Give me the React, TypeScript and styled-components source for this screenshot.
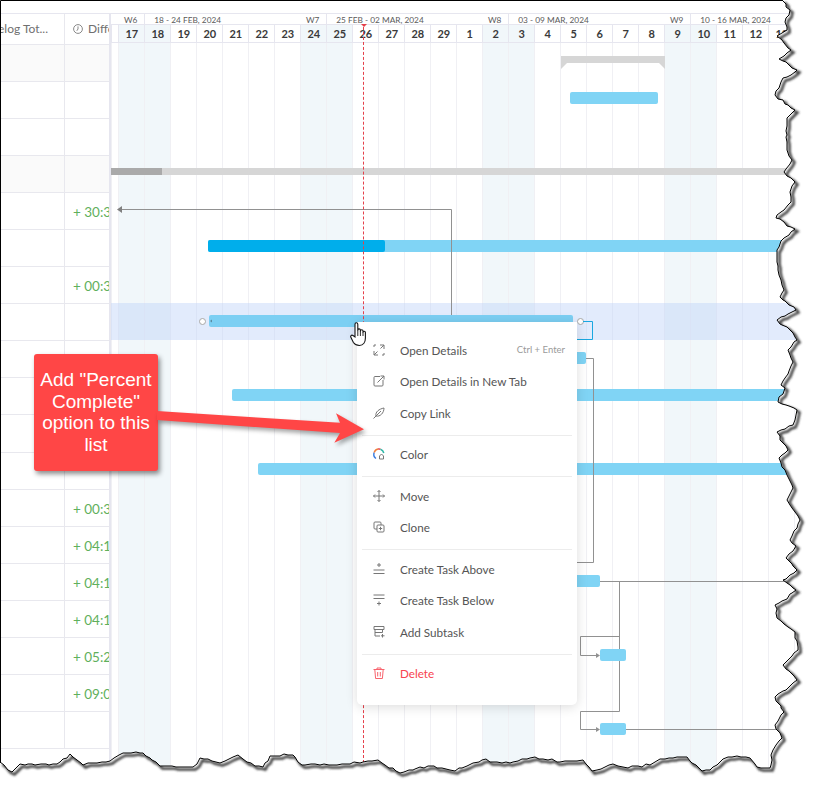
import React from 'react';
import styled, { createGlobalStyle } from 'styled-components';

const GlobalStyle = createGlobalStyle`
    html, body {
        margin: 0;
        padding: 0;
        background: #ffffff;
    }
`;

const Page = styled.div`
    position: relative;
    width: 813px;
    height: 787px;
    overflow: hidden;
    background: #ffffff;
    font-family: 'Lato', 'Liberation Sans', sans-serif;
`;

const Gantt = styled.div`
    display: flex;
    padding-top: 12.5px;
    height: 774px;
    box-sizing: border-box;
`;

/* left table */
const Table = styled.div`
    flex: 0 0 111px;
    box-sizing: border-box;
    border-right: 2px solid #e6e6ef;
    border-top: 1px solid #e6e6ef;
`;

const TableHeader = styled.div`
    display: grid;
    grid-template-columns: 65px 44px;
    height: 31px;
    box-sizing: border-box;
    border-bottom: 1px solid #e8e8ee;
    font-size: 12px;
    color: #707070;
`;

const HeaderCell = styled.div<{ $end?: boolean }>`
    display: flex;
    align-items: center;
    gap: 5px;
    overflow: hidden;
    white-space: nowrap;
    box-sizing: border-box;
    justify-content: ${props => (props.$end ? 'flex-end' : 'flex-start')};
    padding: ${props => (props.$end ? '0 16px 0 0' : '0 0 0 8px')};
    border-right: ${props => (props.$end ? '1px solid #e8e8ee' : 'none')};
`;

const Row = styled.div<{ $shaded?: boolean }>`
    display: grid;
    grid-template-columns: 65px 44px;
    height: 37.1px;
    box-sizing: border-box;
    border-bottom: 1px solid #e8e8ee;
    background: ${props => (props.$shaded ? '#fafafa' : '#ffffff')};
`;

const Cell = styled.div`
    display: flex;
    align-items: center;
    padding: 2px 0 0 8px;
    overflow: hidden;
    white-space: nowrap;
    font-size: 13.5px;
    color: #5fb05c;
    &:first-child {
        border-right: 1px solid #e8e8ee;
    }
`;

/* timeline */
const Timeline = styled.div`
    flex: 1;
    min-width: 0;
    overflow: hidden;
    display: flex;
    flex-direction: column;
`;

const WeekRow = styled.div`
    display: flex;
    height: 11.5px;
    box-sizing: border-box;
    border-top: 1px solid #e6e6ef;
    font-size: 8.3px;
    line-height: 11px;
    color: #5a5a5a;
`;

const Week = styled.div<{ $width: number }>`
    flex: 0 0 ${props => props.$width}px;
    display: flex;
    justify-content: space-between;
    box-sizing: border-box;
    padding: 1px 7px 0 9px;
    white-space: nowrap;
    & + & {
        border-left: 1px solid #e6e6ef;
    }
`;

const DayRow = styled.div`
    display: flex;
    height: 19px;
    box-sizing: border-box;
    border-top: 1px solid #e6e6ef;
    border-bottom: 1px solid #e6e6ef;
`;

const Day = styled.div<{ $weekend?: boolean; $width?: number }>`
    flex: 0 0 ${props => props.$width ?? 26}px;
    box-sizing: border-box;
    display: flex;
    align-items: center;
    justify-content: center;
    border-left: 1px solid #e6e6ef;
    background: ${props => (props.$weekend ? '#f1f7fa' : '#ffffff')};
    font-size: 11px;
    font-weight: 700;
    color: #3a3a3a;
`;

const DayBody = styled.div`
    flex: 1;
    display: flex;
`;

const DayColumn = styled.div<{ $weekend?: boolean; $width?: number }>`
    flex: 0 0 ${props => props.$width ?? 26}px;
    box-sizing: border-box;
    border-left: 1px solid #f0f0f4;
    background: ${props => (props.$weekend ? '#f1f7fa' : '#ffffff')};
`;

/* things drawn over the chart, at chart coordinates */
const RowHighlight = styled.div`
    position: absolute;
    left: 111px;
    right: 0;
    top: 303.3px;
    height: 37px;
    background: rgba(190, 210, 248, 0.446);
`;

const Bar = styled.div<{ $x: number; $y: number; $w: number; $color?: string }>`
    position: absolute;
    left: ${props => props.$x}px;
    top: ${props => props.$y}px;
    width: ${props => props.$w}px;
    height: 12px;
    border-radius: 2px;
    background: ${props => props.$color ?? '#80d4f5'};
`;

const SummaryBar = styled.div<{ $x: number; $w: number; $y: number; $fill?: string }>`
    position: absolute;
    left: ${props => props.$x}px;
    top: ${props => props.$y}px;
    width: ${props => props.$w}px;
    height: 7px;
    background: ${props => props.$fill ?? '#d6d6d6'};
`;

const Bracket = styled(SummaryBar)`
    &::before, &::after {
        content: '';
        position: absolute;
        top: 7px;
        border-top: 6px solid #d6d6d6;
    }
    &::before {
        left: 0;
        border-right: 6px solid transparent;
    }
    &::after {
        right: 0;
        border-left: 6px solid transparent;
    }
`;

const Handle = styled.div<{ $x: number }>`
    position: absolute;
    left: ${props => props.$x - 3.5}px;
    top: 317.5px;
    width: 7px;
    height: 7px;
    box-sizing: border-box;
    border: 1.3px solid #a8a8a8;
    border-radius: 50%;
    background: #ffffff;
`;

const Links = styled.svg`
    position: absolute;
    left: 0;
    top: 0;
    fill: none;
`;

const TodayLine = styled.div`
    position: absolute;
    left: 363px;
    top: 27px;
    height: 736px;
    border-left: 1px dashed #e5404a;
`;

const TodayMark = styled.div`
    position: absolute;
    left: 360.5px;
    top: 24px;
    border-top: 3px solid #e5404a;
    border-left: 3px solid transparent;
    border-right: 3px solid transparent;
`;

/* context menu */
const Menu = styled.div`
    position: absolute;
    left: 357px;
    top: 322px;
    width: 220px;
    height: 383px;
    box-sizing: border-box;
    padding-top: 9px;
    background: #ffffff;
    border-radius: 0 0 5px 5px;
    box-shadow: 0 2px 12px rgba(0, 0, 0, 0.14);
`;

const MenuSection = styled.div`
    padding: 3px 0 6px;
    margin: 0 5px;
    & + & {
        border-top: 1px solid #ececec;
    }
`;

const MenuItem = styled.div<{ $danger?: boolean }>`
    display: flex;
    align-items: center;
    height: 31.5px;
    padding: 0 7px 0 11px;
    font-size: 11.7px;
    color: ${props => (props.$danger ? '#f8434f' : '#555555')};
    svg {
        flex: 0 0 12px;
        margin-right: 15px;
        fill: none;
        stroke: ${props => (props.$danger ? '#f8636d' : '#777777')};
        stroke-width: 1;
        overflow: visible;
    }
`;

const Shortcut = styled.span`
    margin-left: auto;
    font-size: 9.5px;
    color: #9a9a9a;
`;

const Cursor = styled.svg`
    position: absolute;
    left: 350px;
    top: 322px;
`;

/* annotation */
const Callout = styled.div`
    position: absolute;
    left: 34px;
    top: 354px;
    width: 124px;
    height: 117px;
    box-sizing: border-box;
    padding: 15px 2px 0;
    border-radius: 3px;
    background: #ff4646;
    box-shadow: 2px 3px 5px rgba(0, 0, 0, 0.45);
    font-family: 'Liberation Sans', Arial, sans-serif;
    font-size: 19px;
    line-height: 21.7px;
    text-align: center;
    color: #ffffff;
`;

const CalloutArrow = styled.svg`
    position: absolute;
    left: 0;
    top: 0;
    filter: drop-shadow(2px 3px 2px rgba(0, 0, 0, 0.35));
`;

const TornEdge = styled.svg`
    position: absolute;
    left: 0;
    top: 0;
`;

const days = [17, 18, 19, 20, 21, 22, 23, 24, 25, 26, 27, 28, 29, 1, 2, 3, 4, 5, 6, 7, 8, 9, 10, 11, 12, 13, 14];
const weekends = [0, 1, 7, 8, 14, 15, 21, 22];

const rows: { value?: string; shaded?: boolean }[] = [
    { shaded: true }, {}, {}, { shaded: true },
    { value: '+ 30:30' }, {}, { value: '+ 00:30' }, {}, {}, {}, {}, {},
    { value: '+ 00:30' }, { value: '+ 04:15' }, { value: '+ 04:15' }, { value: '+ 04:15' },
    { value: '+ 05:24' }, { value: '+ 09:00' }, {},
];

const edgePoints = [
    [782, 0], [790, 10], [785, 22], [787, 30], [777, 36], [791, 50], [779, 59], [797, 70], [783, 78], [775, 95],
    [795, 110], [787, 118], [787, 150], [792, 160], [784, 172], [795, 182], [790, 192], [791, 202], [777, 215],
    [776, 218], [795, 229], [784, 238], [777, 250], [777, 262], [779, 275], [784, 290], [780, 297], [796, 310],
    [777, 320], [793, 333], [797, 340], [788, 350], [793, 362], [781, 385], [785, 388], [778, 402], [797, 410],
    [793, 425], [777, 432], [788, 450], [779, 458], [785, 470], [793, 488], [787, 500], [800, 520], [790, 540],
    [796, 546], [786, 558], [797, 570], [783, 580], [796, 590], [775, 605], [777, 618], [795, 632], [798, 650],
    [783, 665], [797, 680], [775, 697], [784, 712], [775, 725], [782, 738], [773, 750], [770, 768], [757, 767],
    [750, 758], [737, 756], [723, 759], [710, 770], [702, 771], [687, 757], [660, 759], [650, 765], [623, 767],
    [613, 764], [592, 771], [583, 760], [560, 762], [535, 757], [510, 763], [482, 760], [455, 771], [428, 766],
    [400, 773], [378, 760], [363, 762], [333, 765], [302, 765], [293, 755], [270, 756], [263, 767], [247, 762],
    [238, 755], [220, 763], [200, 758], [193, 767], [160, 766], [143, 753], [123, 753], [110, 761], [83, 765],
    [70, 754], [57, 764], [20, 764], [12, 772], [0, 762],
];

// roughen the hand-read outline a little so that it looks torn
function tornLine(points: number[][]) {
    let seed = 7;
    const noise = () => {
        seed = (seed * 16807) % 2147483647;
        const n = seed % 6;
        return n === 0 ? -1 : n === 1 ? 1 : 0;
    };
    const out: string[] = [];
    points.forEach((p, i) => {
        out.push(`${p[0]},${p[1]}`);
        const next = points[i + 1];
        if (!next) return;
        const steps = Math.floor(Math.hypot(next[0] - p[0], next[1] - p[1]) / 4);
        for (let s = 1; s < steps; s++) {
            const x = Math.round(p[0] + ((next[0] - p[0]) * s) / steps) + noise();
            const y = Math.round(p[1] + ((next[1] - p[1]) * s) / steps) + noise();
            out.push(`${x},${y}`);
        }
    });
    return out.join(' ');
}

const edge = tornLine(edgePoints);

function Clock() {
    return (
        <svg width="10" height="10" viewBox="0 0 10 10" style={{ flex: '0 0 10px' }} fill="none" stroke="#888">
            <circle cx="5" cy="5" r="4.4" />
            <path d="M5 2.4V5L3.8 6.8" />
        </svg>
    );
}

const icons = {
    details: <path d="M7 1H11V5M11 1L7.5 4.5M5 11H1V7M1 11L4.5 7.5M1 3V1H3M11 9V11H9" />,
    newTab: <path d="M7 1.5H2A1 1 0 0 0 1 2.500V10A1 1 0 0 0 2 11H9A1 1 0 0 0 10 10V5M4.500 7.500L11 1M7.500 1H11V4.500" />,
    link: <path d="M3 9C2 5 6 2 11 1C11 6 7 10 3 9ZM.5 11.5L8 4" />,
    move: <path d="M6 .5V11.5M.5 6H11.5M4.5 2L6 .5L7.5 2M4.5 10L6 11.5L7.5 10M2 4.5L.5 6L2 7.5M10 4.5L11.5 6L10 7.5" />,
    clone: <path d="M8 4V2A1 1 0 0 0 7 1H2A1 1 0 0 0 1 2V7A1 1 0 0 0 2 8H4M5 4H10A1 1 0 0 1 11 5V10A1 1 0 0 1 10 11H5A1 1 0 0 1 4 10V5A1 1 0 0 1 5 4ZM7.5 5.8V9.2M5.8 7.5H9.2" />,
    above: <path d="M6 0V4M4 2H8M.5 7H11.5M.5 10.5H11.5" />,
    below: <path d="M.5 1H11.5M.5 4.5H11.5M6 7.5V11.5M4 9.5H8" />,
    subtask: <path d="M1 .5H11V3.5H1ZM2 3.5V10H7M2 6.5H9.5V4M9.5 8V11.5M8 9.8H11.5" />,
    trash: <path d="M.5 2.5H11.5M4 2.5V1H8V2.5M1.8 2.5L2.6 11.5H9.4L10.2 2.5M4.7 5V9.5M7.3 5V9.5" />,
};

function ColorIcon() {
    return (
        <svg width="12" height="12" viewBox="0 0 12 12" style={{ strokeWidth: 1.5 }}>
            <path d="M1.200 4.500A5 5 0 0 0 3 10.500" stroke="#3f7fe0" />
            <path d="M1.200 4.500A5 5 0 0 1 5 1.100" stroke="#f0803c" />
            <path d="M5 1.100A5 5 0 0 1 7.500 1.200" stroke="#e5484d" />
            <path d="M7.500 1.200A5 5 0 0 1 10.800 5" stroke="#2bb5a5" />
            <path d="M6.500 8L8.500 6L10.500 8V11H6.500Z" stroke="#777" strokeWidth="1" />
        </svg>
    );
}

function MenuIcon({ d }: { d: React.ReactNode }) {
    return <svg width="12" height="12" viewBox="0 0 12 12">{d}</svg>;
}

export default function App() {
    return (
        <Page>
            <GlobalStyle />
            <Gantt>
                <Table>
                    <TableHeader>
                        <HeaderCell $end>Timelog Tot...</HeaderCell>
                        <HeaderCell><Clock />Difference</HeaderCell>
                    </TableHeader>
                    {rows.map((row, i) => (
                        <Row key={i} $shaded={row.shaded}>
                            <Cell />
                            <Cell>{row.value}</Cell>
                        </Row>
                    ))}
                </Table>
                <Timeline>
                    <WeekRow>
                        <Week $width={33.3}><span />W6</Week>
                        <Week $width={182}><span>18 - 24 FEB, 2024</span>W7</Week>
                        <Week $width={182}><span>25 FEB - 02 MAR, 2024</span>W8</Week>
                        <Week $width={182}><span>03 - 09 MAR, 2024</span>W9</Week>
                        <Week $width={182}><span>10 - 16 MAR, 2024</span></Week>
                    </WeekRow>
                    <DayRow>
                        <Day $width={7.3} />
                        {days.map((day, i) => (
                            <Day key={i} $weekend={weekends.includes(i)}>{day}</Day>
                        ))}
                    </DayRow>
                    <DayBody>
                        <DayColumn $width={7.3} />
                        {days.map((day, i) => (
                            <DayColumn key={i} $weekend={weekends.includes(i)} />
                        ))}
                    </DayBody>
                </Timeline>
            </Gantt>

            <RowHighlight />

            <Bracket $x={561} $w={104} $y={56} />
            <Bar $x={570} $y={92} $w={88} />
            <SummaryBar $x={111} $w={702} $y={168} />
            <SummaryBar $x={111} $w={51} $y={168} $fill="#aaaaaa" />
            <Bar $x={208} $y={240} $w={605} />
            <Bar $x={208} $y={240} $w={177} $color="#00aeeb" />
            <Bar $x={209} $y={315} $w={364} $color="#7ccff3" />
            <Bar $x={560} $y={352} $w={26} />
            <Bar $x={232} $y={389} $w={581} />
            <Bar $x={258} $y={463} $w={555} />
            <Bar $x={560} $y={575} $w={40} />
            <Bar $x={600} $y={649} $w={26} />
            <Bar $x={600} $y={723} $w={26} />
            <Handle $x={202} />
            <Handle $x={580} />

            <Links width="813" height="787" viewBox="0 0 813 787">
                <g stroke="#919191">
                    <path d="M122 209.5H451.5V315" />
                    <path d="M586 358.500H593.500V562.500H570" />
                    <path d="M600 581.500H790" />
                    <path d="M619.500 581.500V649M619.500 661V711.500H580.500V729.500H598" />
                    <path d="M619.500 636.500H580.500V655.500H598" />
                    <path d="M626 729.500H785" />
                </g>
                <path d="M583 321.500H592.500V339.500H575" stroke="#1aa7e0" />
                <path d="M117 209.500L122 206V213Z" fill="#808080" />
                <path d="M596 653L600 655.500L596 658Z" fill="#919191" />
                <path d="M596 727L600 729.500L596 732Z" fill="#919191" />
                <path d="M210 321L212 319.500V322.500Z" fill="#5c8aa0" />
            </Links>

            <TodayLine />
            <TodayMark />

            <Menu>
                <MenuSection>
                    <MenuItem><MenuIcon d={icons.details} />Open Details<Shortcut>Ctrl + Enter</Shortcut></MenuItem>
                    <MenuItem><MenuIcon d={icons.newTab} />Open Details in New Tab</MenuItem>
                    <MenuItem><MenuIcon d={icons.link} />Copy Link</MenuItem>
                </MenuSection>
                <MenuSection>
                    <MenuItem><ColorIcon />Color</MenuItem>
                </MenuSection>
                <MenuSection>
                    <MenuItem><MenuIcon d={icons.move} />Move</MenuItem>
                    <MenuItem><MenuIcon d={icons.clone} />Clone</MenuItem>
                </MenuSection>
                <MenuSection>
                    <MenuItem><MenuIcon d={icons.above} />Create Task Above</MenuItem>
                    <MenuItem><MenuIcon d={icons.below} />Create Task Below</MenuItem>
                    <MenuItem><MenuIcon d={icons.subtask} />Add Subtask</MenuItem>
                </MenuSection>
                <MenuSection>
                    <MenuItem $danger><MenuIcon d={icons.trash} />Delete</MenuItem>
                </MenuSection>
            </Menu>

            <Cursor width="18" height="25" viewBox="0 0 18 25">
                <path
                    d="M5 11V2.2a1.4 1.4 0 0 1 2.8 0V9V8.2a1.3 1.3 0 0 1 2.6 0V9.5V9a1.3 1.3 0 0 1 2.6 0V10.5a1.2 1.2 0 0 1 2.4 0V16c0 4-2 7.5-6 7.5c-3 0-4.500-1-6-3L1 15.500c-1-1.500.5-3 2-2L5 15Z"
                    fill="#ffffff"
                    stroke="#141414"
                    strokeWidth="1.1"
                />
                <path d="M7.800 9V14M10.400 9V14M13 10V14" stroke="#141414" strokeWidth=".9" fill="none" />
            </Cursor>

            <Callout>Add "Percent Complete" option to this list</Callout>
            <CalloutArrow width="813" height="787" viewBox="0 0 813 787">
                <path d="M157 411L340 422.700L336 413.300L364 429.300L334.300 442.700L340 433L157 420Z" fill="#ff4646" />
            </CalloutArrow>

            <TornEdge width="813" height="787" viewBox="0 0 813 787">
                <defs>
                    <clipPath id="outside">
                        <polygon points={`${edge} 0,787 813,787 813,0`} />
                    </clipPath>
                    <filter id="soften" x="-5%" y="-5%" width="110%" height="110%">
                        <feGaussianBlur stdDeviation="0.9" />
                    </filter>
                </defs>
                <polygon points={`${edge} 0,787 813,787 813,0`} fill="#ffffff" />
                <g clipPath="url(#outside)">
                    <polyline points={edge} transform="translate(2.5 2.5)" fill="none" stroke="#3a3a3a" strokeWidth="2.5" filter="url(#soften)" />
                </g>
                <polyline points={edge} fill="none" stroke="#000000" strokeWidth="1" />
                <path d="M.5 763V.5H783" fill="none" stroke="#000000" strokeWidth="1" />
            </TornEdge>
        </Page>
    );
}
